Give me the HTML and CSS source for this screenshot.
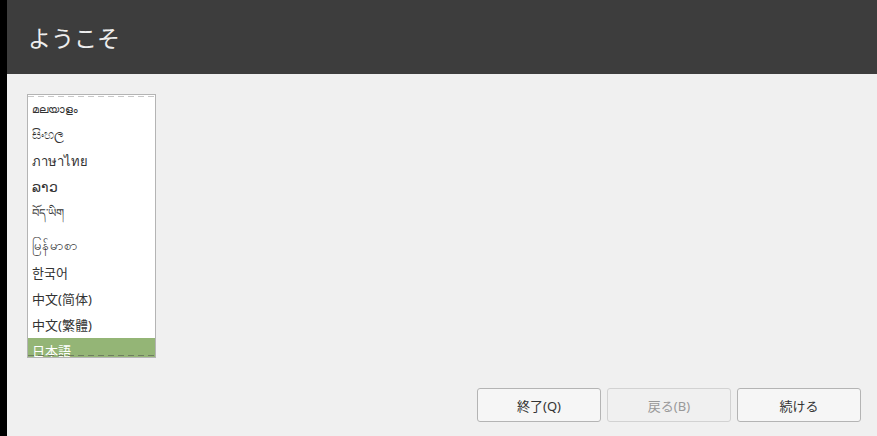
FILE: index.html
```html
<!DOCTYPE html>
<html lang="ja">
<head>
    <meta charset="UTF-8">
    <title>ようこそ</title>
    <link rel="stylesheet" href="styles.css">
</head>
<body>
    <div class="window">
        <header class="title-bar">
            <h1>ようこそ</h1>
        </header>
        <main class="content">
            <div class="lang-list">
                <ul>
                    <li class="row-ml">മലയാളം</li>
                    <li class="row-si">සිංහල</li>
                    <li class="row-th">ภาษาไทย</li>
                    <li class="row-lo">ລາວ</li>
                    <li class="row-bo">བོད་ཡིག</li>
                    <li class="row-my">မြန်မာစာ</li>
                    <li class="row-ko">한국어</li>
                    <li class="row-cn">中文(简体)</li>
                    <li class="row-cn">中文(繁體)</li>
                    <li class="row-cn selected">日本語</li>
                </ul>
                <div class="edge edge-top"></div>
                <div class="edge edge-bottom"></div>
            </div>
            <div class="actions">
                <button>終了(Q)</button>
                <button disabled>戻る(B)</button>
                <button>続ける</button>
            </div>
        </main>
    </div>
</body>
</html>
```

FILE: styles.css
```css
* {
    box-sizing: border-box;
}
html, body {
    margin: 0;
    height: 100%;
}
body {
    background: #000;
    padding-left: 7px;
    overflow: hidden;
    font-family: "Noto Sans", "Noto Sans CJK JP", sans-serif;
    color: #333;
}
.window {
    height: 436px;
    display: flex;
    flex-direction: column;
    background: #f0f0f0;
}
.title-bar {
    height: 74px;
    flex: none;
    background: #3d3d3d;
    display: flex;
    align-items: center;
    padding-left: 21px;
}
.title-bar h1 {
    margin: 0;
    font-family: "Noto Sans CJK JP", sans-serif;
    font-size: 23px;
    font-weight: 400;
    color: #eee;
}
.content {
    flex: 1;
    display: flex;
    flex-direction: column;
    justify-content: space-between;
    padding: 20px 16px 14px 20px;
}
.lang-list {
    position: relative;
    width: 129px;
    height: 264px;
    background: #fff;
    border: 1px solid #b4b4b4;
    overflow: hidden;
}
.lang-list ul {
    list-style: none;
    margin: 0;
    padding: 0;
}
.lang-list li {
    padding-left: 4px;
    font-size: 13px;
    line-height: 26px;
    height: 26px;
    white-space: nowrap;
}
.lang-list .row-ml {
    margin-top: 1px;
    font-size: 11px;
}
.lang-list .row-si {
    font-size: 13px;
    line-height: 25px;
}
.lang-list .row-lo { font-size: 14px; }
.lang-list .row-bo {
    height: 27px;
    font-size: 11.5px;
    line-height: 25px;
}
.lang-list .row-my {
    height: 33px;
    line-height: 36px;
}
.lang-list li.selected {
    height: 20px;
    background: #94b576;
    color: #fff;
    line-height: 27px;
    overflow: visible;
}
/* dashed scroll hints just inside the list frame */
.edge {
    position: absolute;
    left: 0;
    right: 0;
    height: 1px;
}
.edge-top {
    top: 1px;
    background: repeating-linear-gradient(90deg, #c8c8c8 0 6px, transparent 6px 10px);
}
.edge-bottom {
    bottom: 1px;
    background: repeating-linear-gradient(90deg, #6f7d60 0 6px, transparent 6px 10px);
}
.actions {
    display: flex;
    justify-content: flex-end;
    gap: 6px;
}
.actions button {
    width: 124px;
    height: 34px;
    padding: 0;
    background: #f6f6f6;
    border: 1px solid #b4b4b4;
    border-radius: 3px;
    font-family: "Noto Sans", "Noto Sans CJK JP", sans-serif;
    font-size: 13px;
    color: #333;
}
.actions button:disabled {
    background: #f0f0f0;
    border-color: #d2d2d2;
    color: #999;
}
```
